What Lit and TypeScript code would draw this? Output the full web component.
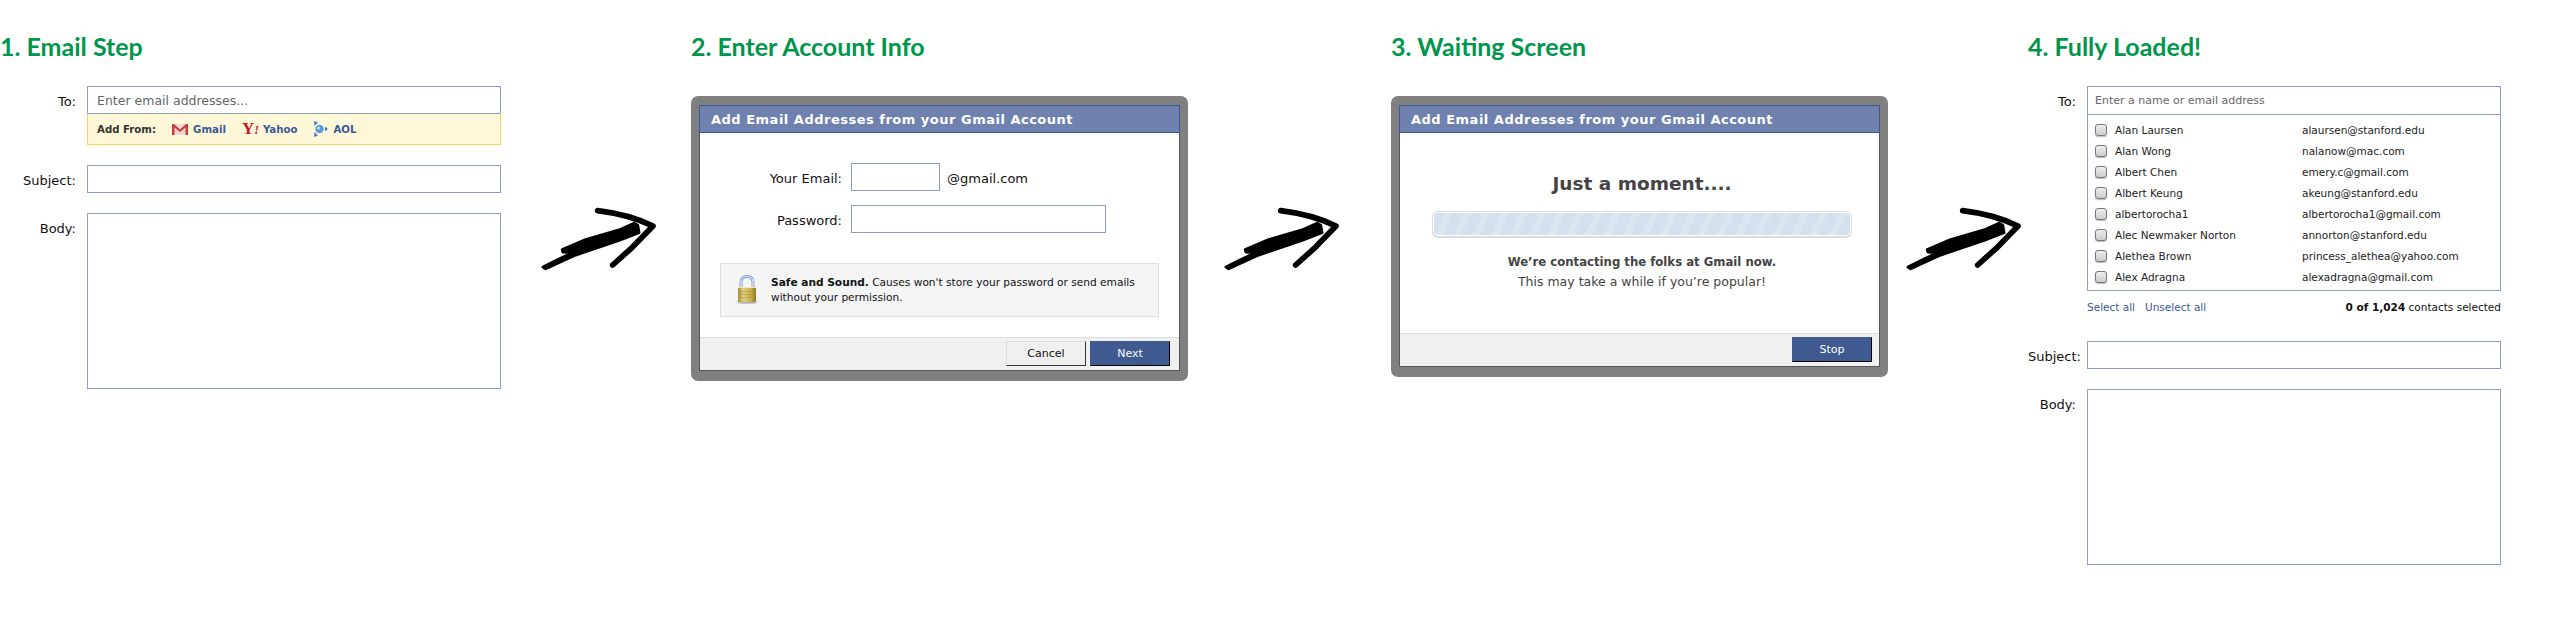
import { LitElement, html, css, svg } from "lit";
import { customElement } from "lit/decorators.js";

const contacts = [
  ["Alan Laursen", "alaursen@stanford.edu"],
  ["Alan Wong", "nalanow@mac.com"],
  ["Albert Chen", "emery.c@gmail.com"],
  ["Albert Keung", "akeung@stanford.edu"],
  ["albertorocha1", "albertorocha1@gmail.com"],
  ["Alec Newmaker Norton", "annorton@stanford.edu"],
  ["Alethea Brown", "princess_alethea@yahoo.com"],
  ["Alex Adragna", "alexadragna@gmail.com"],
];

const arrow = svg`
  <svg class="arrow" width="160" height="100" viewBox="0 0 480 300">
    <path d="M236 62 C285 68 340 78 402 108 L340 172 L281 225" fill="none" stroke="#000" stroke-width="17" stroke-linecap="round" stroke-linejoin="round" />
    <path d="M72 231 L120 207 L162 188 L132 186 L130 179 L200 149 L300 120 L345 100 L356 106 L360 128 L300 151 L170 195 L80 236 Z" fill="#000" stroke="#000" stroke-width="9" stroke-linejoin="round" />
  </svg>
`;

const gmailIcon = svg`
  <svg width="16" height="11" viewBox="0 0 16 11">
    <rect width="16" height="11" fill="#f3d6d0" />
    <path d="M0 0H2L8 5.5L14 0H16V11H13.5V3.5L8 8L2.5 3.5V11H0Z" fill="#cc3c3c" />
  </svg>
`;

const aolIcon = svg`
  <svg width="15" height="16" viewBox="0 0 15 16">
    <path d="M1 0L5 1.5L1.5 5Z M1 16L1.5 11L5 14.5Z M15 8L12 5.5V10.5Z" fill="#3f83c8" />
    <circle cx="6.5" cy="8" r="4.2" fill="#5b9bd5" />
    <circle cx="5.5" cy="7" r="1.6" fill="#c4dcf2" />
  </svg>
`;

const lockIcon = svg`
  <svg width="22" height="30" viewBox="0 0 22 30">
    <defs>
      <linearGradient id="gold" x1="0" y1="0" x2="1" y2="0">
        <stop offset="0" stop-color="#a68f2c" />
        <stop offset="0.3" stop-color="#e0cf7e" />
        <stop offset="0.75" stop-color="#c4ab45" />
        <stop offset="1" stop-color="#8f7a22" />
      </linearGradient>
      <filter id="soft"><feGaussianBlur stdDeviation="1.2" /></filter>
    </defs>
    <ellipse cx="11" cy="27" rx="10" ry="1.6" fill="#999" filter="url(#soft)" />
    <path d="M5 13V7.5C5 3.5 7.5 1.5 11 1.5S17 3.5 17 7.5V13" fill="none" stroke="#7f9bd6" stroke-width="3" />
    <path d="M5 13V7.5C5 3.5 7.5 1.5 11 1.5S17 3.5 17 7.5V13" fill="none" stroke="#e6edfa" stroke-width="1.2" />
    <rect x="2" y="12" width="18" height="15" rx="1" fill="url(#gold)" />
    <path d="M2 16.5H20M2 19.5H20M2 22.5H20" stroke="#9c872c" stroke-opacity="0.45" stroke-width="1" />
    <path d="M2 12.5H20" stroke="#f3e8ae" stroke-width="1" />
  </svg>
`;

@customElement("app-root")
export class AppRoot extends LitElement {
  static styles = css`
    :host {
      display: block;
      width: 2562px;
      height: 634px;
      background: #fff;
      font-family: "DejaVu Sans", sans-serif;
      font-size: 13px;
      color: #111;
      overflow: hidden;
    }
    .page {
      display: flex;
      align-items: flex-start;
    }
    .col {
      display: flex;
      flex-direction: column;
      flex: none;
    }
    .col1 { width: 501px; }
    .col2, .col3 { width: 497px; }
    .col4 { width: 473px; }
    .gap1 { width: 190px; }
    .gap2 { width: 203px; }
    .gap3 { width: 140px; }
    .gutter {
      flex: none;
      padding-top: 190px;
    }
    .gap1 .arrow { margin-left: 18px; }
    .gap2 .arrow { margin-left: 14px; }
    .gap3 .arrow { margin-left: -4px; }
    h2 {
      margin: 31px 0 25px;
      font-family: "Lato", sans-serif;
      font-size: 25px;
      font-weight: 700;
      line-height: 30px;
      color: #00964b;
      white-space: nowrap;
    }

    .form {
      display: grid;
      column-gap: 11px;
      row-gap: 20px;
    }
    .col1 .form { grid-template-columns: 76px 414px; }
    .col4 .form { grid-template-columns: 48px 414px; }
    .label {
      text-align: right;
      padding-top: 8px;
      line-height: 16px;
    }
    .field {
      box-sizing: border-box;
      height: 28px;
      border: 1px solid #8a9dc6;
      background: #fff;
    }
    .area-short { height: 176px; }
    .area-tall { height: 176px; }
    .hint {
      box-sizing: border-box;
      height: 28px;
      line-height: 27px;
      color: #666;
      white-space: nowrap;
    }
    .hint.big {
      padding-left: 9px;
      font-size: 12.5px;
    }
    .hint.small {
      padding-left: 7px;
      font-size: 11px;
    }

    .add-from {
      box-sizing: border-box;
      display: flex;
      align-items: center;
      height: 32px;
      margin-top: -1px;
      padding-left: 9px;
      background: #fff8d8;
      border: 1px solid #eed95c;
      border-top-color: #8a9dc6;
      font-size: 10.2px;
      font-weight: 700;
      color: #333;
      white-space: nowrap;
    }
    .add-from b { margin-right: 16px; }
    .source {
      display: flex;
      align-items: center;
      gap: 5px;
      margin-right: 16px;
      color: #3b5998;
    }
    .yahoo-mark {
      width: 16px;
      font-family: "Liberation Serif", serif;
      font-size: 17px;
      font-weight: 700;
      line-height: 14px;
      color: #c8141e;
    }
    .yahoo-mark i { font-size: 12px; }

    .dialog {
      box-sizing: border-box;
      margin-top: 10px;
      border-style: solid;
      border-color: #808080;
      border-width: 9px 8px 10px;
      border-radius: 7px;
      background: #fff;
    }
    .inner {
      border: 1px solid #555;
      border-top: 0;
      background: #fff;
    }
    .head {
      box-sizing: border-box;
      height: 28px;
      margin: 0 -1px;
      padding-left: 11px;
      background: #6f81ae;
      border: 1px solid #3b5998;
      color: #fff;
      font-size: 13px;
      letter-spacing: 0.5px;
      font-weight: 700;
      line-height: 28px;
      white-space: nowrap;
    }
    .account {
      box-sizing: border-box;
      height: 204px;
      padding-top: 30px;
    }
    .account-row {
      display: flex;
      align-items: center;
      margin-bottom: 14px;
    }
    .account-row label {
      width: 142px;
      margin-right: 9px;
      padding-top: 2px;
      text-align: right;
    }
    .account-row span { padding-top: 2px; }
    .account-row .email { width: 89px; margin-right: 7px; }
    .account-row .pass { width: 255px; }
    .notice {
      box-sizing: border-box;
      display: flex;
      align-items: center;
      gap: 13px;
      height: 54px;
      margin: 30px 20px 0;
      padding-left: 15px;
      background: #f5f5f5;
      border: 1px solid #ddd;
      font-size: 10.6px;
      line-height: 15px;
    }
    .waiting {
      box-sizing: border-box;
      height: 200px;
      padding: 39px 0 0 5px;
      text-align: center;
      color: #444;
    }
    .waiting h3 {
      margin: 0 0 16px;
      font-size: 18.5px;
      line-height: 24px;
      font-weight: 700;
    }
    .bar {
      box-sizing: border-box;
      height: 24px;
      margin: 0 28px 16px;
      border: 1px solid #fff;
      border-radius: 5px;
      outline: 1px solid #ddd;
      box-shadow: 0 1px 0 1px #ddd;
      background: repeating-linear-gradient(115deg, #d3e0ee 0 10px, #dbe6f1 10px 17px);
    }
    .waiting p {
      margin: 0;
      line-height: 20px;
      font-size: 12.5px;
    }
    .waiting p.strong {
      font-size: 11.7px;
      font-weight: 700;
    }
    .foot {
      box-sizing: border-box;
      display: flex;
      justify-content: flex-end;
      gap: 4px;
      height: 33px;
      padding: 3px 9px 0 0;
      background: #f0f0f0;
      border-top: 1px solid #ddd;
    }
    .foot.stop { padding-right: 7px; }
    .btn {
      box-sizing: border-box;
      width: 80px;
      height: 25px;
      text-align: center;
      font-size: 11px;
      line-height: 24px;
      border: 1px solid #ddd;
      border-right-color: #333;
      border-bottom-color: #333;
    }
    .btn.plain { background: #f0f0f0; color: #111; }
    .btn.primary {
      background: #3f5a91;
      color: #fff;
      border-color: #3f5a91 #000 #000 #3f5a91;
    }

    .picker { border: 1px solid #8a9dc6; }
    .picker .hint { height: 27px; }
    .list {
      border-top: 1px solid #8a9dc6;
      padding: 4px 0 3px 7px;
    }
    .contact {
      display: flex;
      align-items: center;
      height: 21px;
      font-size: 10.5px;
      color: #222;
      white-space: nowrap;
    }
    .box {
      box-sizing: border-box;
      width: 12px;
      height: 12px;
      margin-right: 8px;
      border: 1px solid #777;
      border-radius: 3px;
      background: linear-gradient(#eee, #ccc);
      box-shadow: 0 1px 1px #bbb;
    }
    .who { width: 187px; }
    .select-row {
      grid-column: 2;
      display: flex;
      justify-content: space-between;
      height: 30px;
      margin-top: -20px;
      padding-top: 8px;
      box-sizing: border-box;
      font-size: 10.5px;
      line-height: 16px;
    }
    .links a { color: #3b5998; margin-right: 10px; }
  `;

  private dialogHead() {
    return html`<div class="head">Add Email Addresses from your Gmail Account</div>`;
  }

  render() {
    return html`
      <div class="page">
        <section class="col col1">
          <h2>1. Email Step</h2>
          <div class="form">
            <div class="label">To:</div>
            <div>
              <div class="field"><div class="hint big">Enter email addresses...</div></div>
              <div class="add-from">
                <b>Add From:</b>
                <span class="source">${gmailIcon}Gmail</span>
                <span class="source"><span class="yahoo-mark">Y<i>!</i></span>Yahoo</span>
                <span class="source">${aolIcon}AOL</span>
              </div>
            </div>
            <div class="label">Subject:</div>
            <div class="field"></div>
            <div class="label">Body:</div>
            <div class="field area-short"></div>
          </div>
        </section>
        <div class="gutter gap1">${arrow}</div>

        <section class="col col2">
          <h2>2. Enter Account Info</h2>
          <div class="dialog">
            <div class="inner">
              ${this.dialogHead()}
              <div class="account">
                <div class="account-row">
                  <label>Your Email:</label>
                  <div class="field email"></div>
                  <span>@gmail.com</span>
                </div>
                <div class="account-row">
                  <label>Password:</label>
                  <div class="field pass"></div>
                </div>
                <div class="notice">
                  ${lockIcon}
                  <div><b>Safe and Sound.</b> Causes won't store your password or send emails<br />without your permission.</div>
                </div>
              </div>
              <div class="foot">
                <div class="btn plain">Cancel</div>
                <div class="btn primary">Next</div>
              </div>
            </div>
          </div>
        </section>
        <div class="gutter gap2">${arrow}</div>

        <section class="col col3">
          <h2>3. Waiting Screen</h2>
          <div class="dialog">
            <div class="inner">
              ${this.dialogHead()}
              <div class="waiting">
                <h3>Just a moment....</h3>
                <div class="bar"></div>
                <p class="strong">We’re contacting the folks at Gmail now.</p>
                <p>This may take a while if you’re popular!</p>
              </div>
              <div class="foot stop"><div class="btn primary">Stop</div></div>
            </div>
          </div>
        </section>
        <div class="gutter gap3">${arrow}</div>

        <section class="col col4">
          <h2>4. Fully Loaded!</h2>
          <div class="form">
            <div class="label">To:</div>
            <div class="picker">
              <div class="hint small">Enter a name or email address</div>
              <div class="list">
                ${contacts.map(
                  ([name, mail]) => html`
                    <div class="contact">
                      <span class="box"></span>
                      <span class="who">${name}</span>
                      <span>${mail}</span>
                    </div>
                  `
                )}
              </div>
            </div>
            <div class="select-row">
              <span class="links"><a>Select all</a><a>Unselect all</a></span>
              <span><b>0 of 1,024</b> contacts selected</span>
            </div>
            <div class="label">Subject:</div>
            <div class="field"></div>
            <div class="label">Body:</div>
            <div class="field area-tall"></div>
          </div>
        </section>
      </div>
    `;
  }
}
